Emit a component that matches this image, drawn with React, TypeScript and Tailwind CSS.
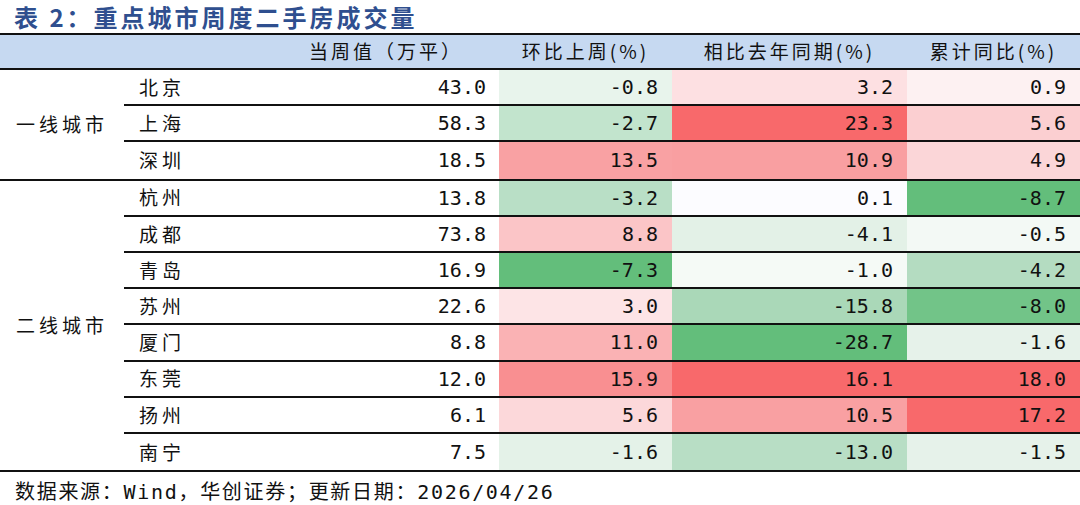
import React from "react";

type Row = { city: string; v: string; a: string; ac: string; b: string; bc: string; c: string; cc: string };

const g1: Row[] = [
  { city: "北京", v: "43.0", a: "-0.8", ac: "#e8f4ec", b: "3.2", bc: "#fde0e2", c: "0.9", cc: "#fdf1f2" },
  { city: "上海", v: "58.3", a: "-2.7", ac: "#c2e4cd", b: "23.3", bc: "#f8696b", c: "5.6", cc: "#fbcfd1" },
  { city: "深圳", v: "18.5", a: "13.5", ac: "#f9a1a3", b: "10.9", bc: "#f99fa1", c: "4.9", cc: "#fbd6d8" },
];
const g2: Row[] = [
  { city: "杭州", v: "13.8", a: "-3.2", ac: "#b9dfc6", b: "0.1", bc: "#fcfcff", c: "-8.7", cc: "#63be7b" },
  { city: "成都", v: "73.8", a: "8.8", ac: "#fbc5c7", b: "-4.1", bc: "#e3f1e7", c: "-0.5", cc: "#f3f9f5" },
  { city: "青岛", v: "16.9", a: "-7.3", ac: "#63be7b", b: "-1.0", bc: "#f5faf6", c: "-4.2", cc: "#b4dcc1" },
  { city: "苏州", v: "22.6", a: "3.0", ac: "#fde4e6", b: "-15.8", bc: "#aad8b8", c: "-8.0", cc: "#72c488" },
  { city: "厦门", v: "8.8", a: "11.0", ac: "#fab2b4", b: "-28.7", bc: "#63be7b", c: "-1.6", cc: "#e6f2ea" },
  { city: "东莞", v: "12.0", a: "15.9", ac: "#f98f91", b: "16.1", bc: "#f8696b", c: "18.0", cc: "#f8696b" },
  { city: "扬州", v: "6.1", a: "5.6", ac: "#fcd8da", b: "10.5", bc: "#f9a0a2", c: "17.2", cc: "#f8696b" },
  { city: "南宁", v: "7.5", a: "-1.6", ac: "#e4f2e8", b: "-13.0", bc: "#b8dec5", c: "-1.5", cc: "#e6f2ea" },
];

const cjk = { fontFamily: '"Noto Sans CJK SC", sans-serif' };
const mono = { fontFamily: '"DejaVu Sans Mono", "Noto Sans CJK SC", monospace' };

function DataRow({ r, last }: { r: Row; last: boolean }) {
  return (
    <div className={`flex h-[36.2px] items-stretch ${last ? "" : "border-b-2 border-[#111]"}`}>
      <div className="w-[136px] flex items-center pl-[15px] text-[19px] tracking-[4px] text-[#111]" style={cjk}>
        {r.city}
      </div>
      <div className="w-[239px] flex items-center justify-end pr-[13px] text-[20px] text-[#111]" style={mono}>
        {r.v}
      </div>
      <div className="w-[173px] flex items-center justify-end pr-[14px] text-[20px] text-[#111]" style={{ ...mono, backgroundColor: r.ac }}>
        {r.a}
      </div>
      <div className="w-[235px] flex items-center justify-end pr-[14px] text-[20px] text-[#111]" style={{ ...mono, backgroundColor: r.bc }}>
        {r.b}
      </div>
      <div className="w-[173px] flex items-center justify-end pr-[14px] text-[20px] text-[#111]" style={{ ...mono, backgroundColor: r.cc }}>
        {r.c}
      </div>
    </div>
  );
}

function Group({ label, rows }: { label: string; rows: Row[] }) {
  return (
    <div className="flex border-b-2 border-[#111]">
      <div className="w-[124px] flex items-center pl-[16px] text-[19px] tracking-[4px] text-[#111]" style={cjk}>
        {label}
      </div>
      <div className="flex-1 flex flex-col">
        {rows.map((r, i) => (
          <DataRow key={r.city} r={r} last={i === rows.length - 1} />
        ))}
      </div>
    </div>
  );
}

export default function App() {
  return (
    <div className="w-[1080px] h-[505px] bg-white overflow-hidden">
      <div className="h-[33px] flex items-center pl-[14px] text-[24px] font-bold tracking-[3px] text-[#2f4f8f]" style={cjk}>
        表 2：重点城市周度二手房成交量
      </div>
      <div className="h-[37px] flex border-y-2 border-[#111] bg-[#c6d9f1] text-[19px] tracking-[3px] text-[#111]" style={cjk}>
        <div className="w-[260px]" />
        <div className="w-[239px] flex items-center justify-end pr-[36px]">当周值（万平）</div>
        <div className="w-[173px] flex items-center justify-center">环比上周(%)</div>
        <div className="w-[235px] flex items-center justify-center">相比去年同期(%)</div>
        <div className="w-[173px] flex items-center justify-center">累计同比(%)</div>
      </div>
      <Group label="一线城市" rows={g1} />
      <Group label="二线城市" rows={g2} />
      <div className="pl-[15px] pt-[5px] text-[20px] tracking-[1.7px] text-[#111]" style={mono}>
        数据来源：Wind，华创证券；更新日期：2026/04/26
      </div>
    </div>
  );
}
